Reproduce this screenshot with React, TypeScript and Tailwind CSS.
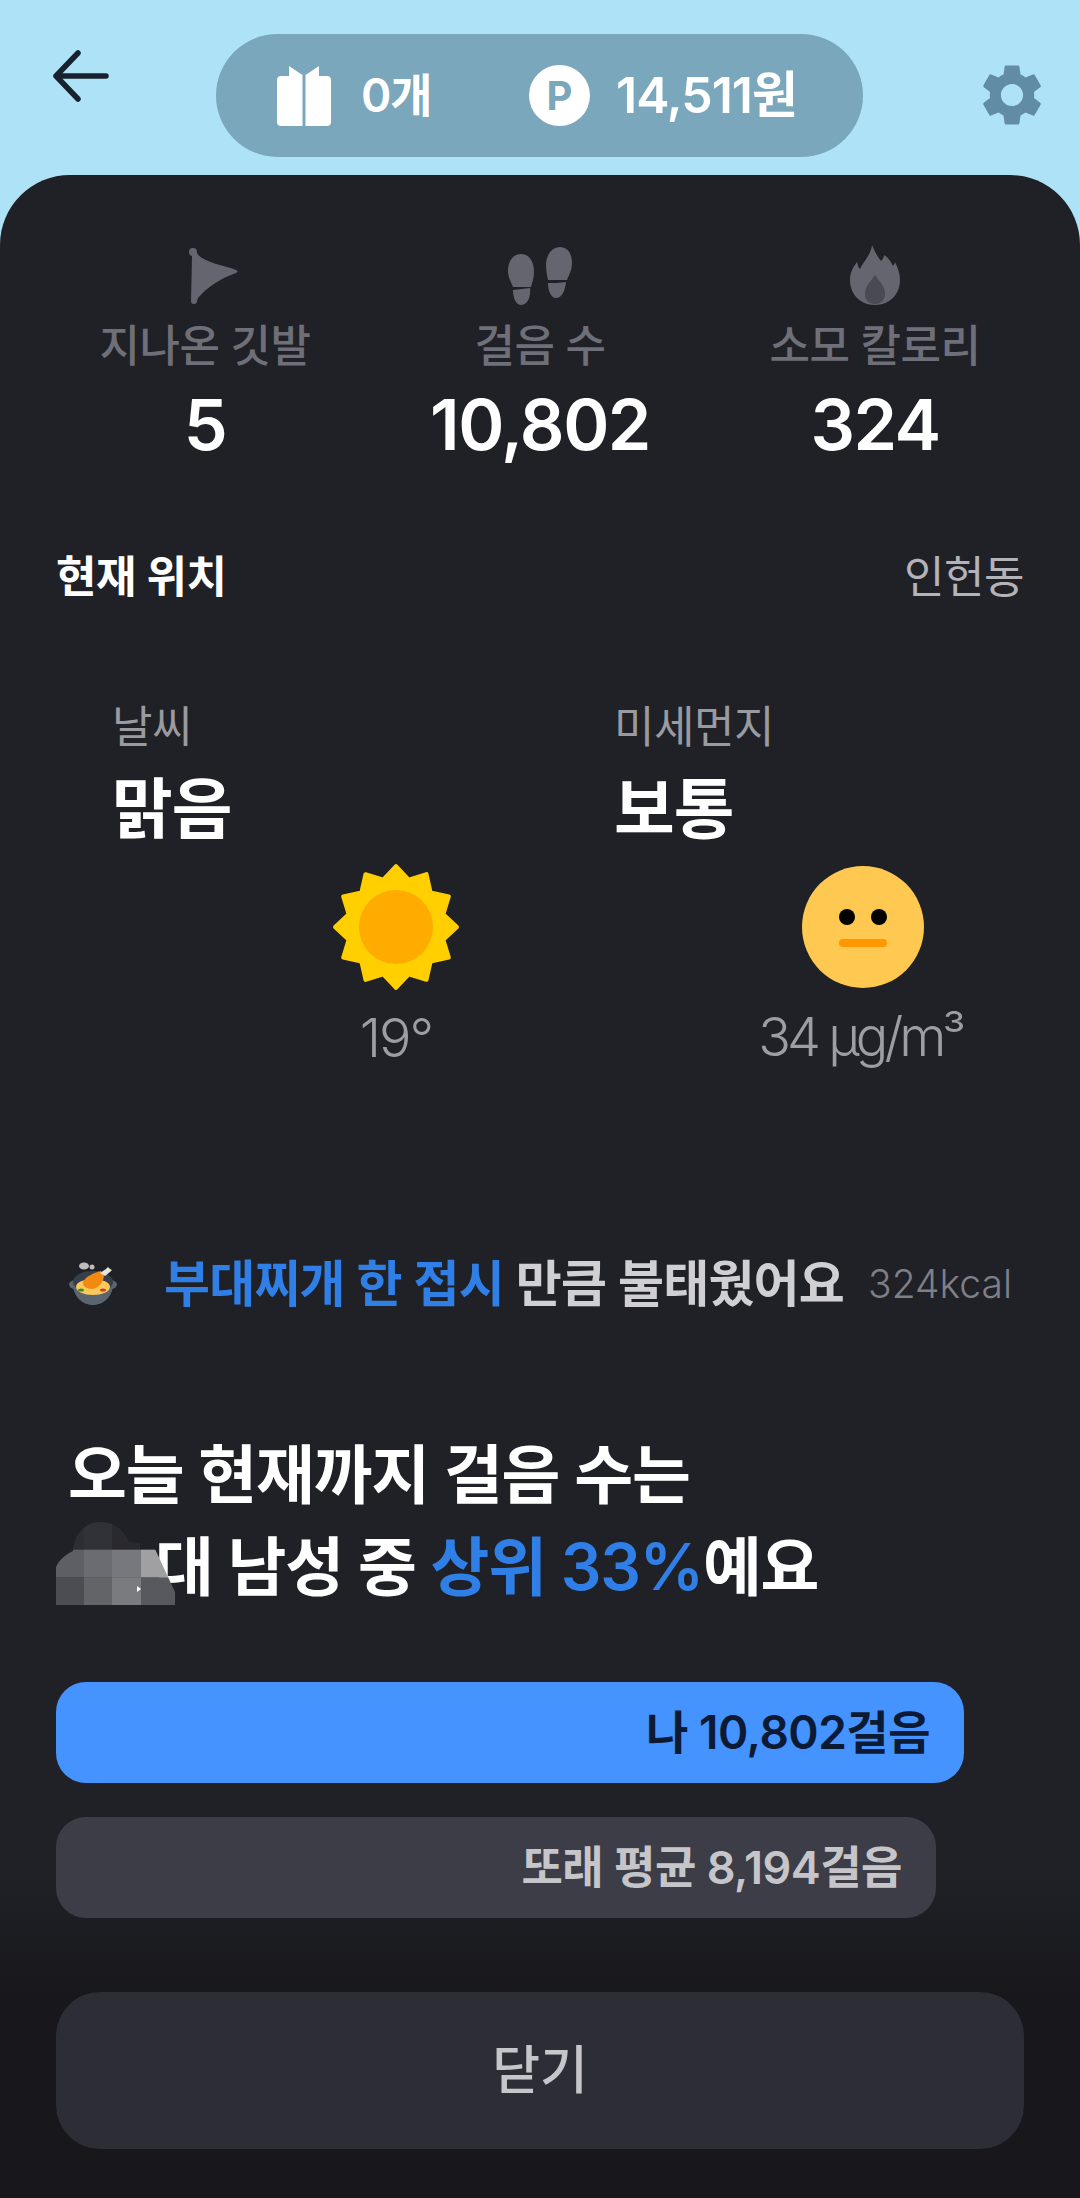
import { MdSettings } from 'react-icons/md';

const sunPoints = Array.from({ length: 24 }, (_, i) => {
  const r = i % 2 === 0 ? 61 : 49;
  const a = (i * Math.PI) / 12 - Math.PI / 2;
  return `${64 + r * Math.cos(a)},${64 + r * Math.sin(a)}`;
}).join(' ');

function BackArrow() {
  return (
    <svg width="56" height="52" viewBox="0 0 56 52" fill="none" stroke="#18222e" strokeWidth="5.5" strokeLinecap="round" strokeLinejoin="round">
      <path d="M53 26H3M25 3 3 26l22 23" />
    </svg>
  );
}

function Gift() {
  return (
    <svg width="54" height="60" viewBox="0 0 54 60" fill="#fff">
      <path d="M12 0 25.5 9v51H4a4 4 0 0 1-4-4V14a4 4 0 0 1 4-4h8V0Z" />
      <path d="M42 0 28.5 9v51H50a4 4 0 0 0 4-4V14a4 4 0 0 0-4-4h-8V0Z" />
    </svg>
  );
}

function FlagIcon() {
  return (
    <svg className="ml-[18px]" width="52" height="58" viewBox="0 0 52 58" fill="#64656f">
      <path d="M1 5a4 4 0 0 1 8 0c0 2 2 4 5 6 10 6 24 8 34 12 2 1 2 2 0 3-14 5-28 13-38 25l-1 3a3 3 0 0 1-6 0L4 9a4 4 0 0 1-3-4Z" />
    </svg>
  );
}

function StepsIcon() {
  return (
    <svg width="66" height="58" viewBox="0 0 66 58" fill="#64656f">
      <path d="M14 7c8 0 13 7 13 18 0 6-2 11-3 15H6C4 35 1 30 1 24 1 14 6 7 14 7Z" />
      <path d="M6 43c6-1 12-1 17-2 1 8-2 17-9 17-5 0-8-7-8-15Z" />
      <path d="M53 0c8 0 12 7 12 16 0 7-3 12-5 17H41c-1-5-2-10-2-15C39 8 45 0 53 0Z" />
      <path d="M41 36c6 0 12 0 18-1-1 9-4 16-10 16-5 0-8-7-8-15Z" />
    </svg>
  );
}

function FlameIcon() {
  return (
    <svg width="50" height="60" viewBox="0 0 50 60">
      <path fill="#64656f" d="M22 0c3 7 5 11 9 16 2-2 3-4 3-6 4 2 7 7 9 11 1-1 2-3 2-4 3 6 5 12 5 18 0 14-10 25-25 25S0 49 0 35c0-7 3-13 7-18 1 3 1 5 3 7C13 17 21 10 22 0Z" />
      <path fill="#494a54" d="M25 30c4 6 10 11 10 19 0 6-4 10-10 10s-10-4-10-10c0-8 6-13 10-19Z" />
    </svg>
  );
}

function PotEmoji() {
  return (
    <svg width="50" height="44" viewBox="0 0 50 44">
      <ellipse cx="16" cy="4" rx="5" ry="3.5" fill="#bdbdbd" />
      <circle cx="24" cy="5" r="2.5" fill="#bdbdbd" />
      <path d="M1 22c1-3 4-4 6-4v9c-3 0-6-2-6-5ZM49 22c-1-3-4-4-6-4v9c3 0 6-2 6-5Z" fill="#5a6570" />
      <ellipse cx="25" cy="20" rx="20" ry="11" fill="#37404a" />
      <path d="M5 22c0 12 9 21 20 21s20-9 20-21c-4 7-12 10-20 10S9 29 5 22Z" fill="#5a6570" />
      <ellipse cx="25" cy="25" rx="17" ry="8" fill="#fbc95a" />
      <path d="M15 20c2-5 10-9 18-11l3 5c-1 7-5 12-12 13-5 0-10-3-9-7Z" fill="#f28a11" />
      <path d="m32 11 6-4 2-2 2 2 2 1-2 2-5 4-5-3Z" fill="#e8e4de" />
      <ellipse cx="13" cy="28" rx="3" ry="1.6" fill="#3d8b37" />
      <ellipse cx="35" cy="28" rx="3" ry="1.6" fill="#d23a2f" />
    </svg>
  );
}

// mosaic patch that hides the age digit in the headline
function MosaicPatch() {
  const cols = [0, 28, 56, 85];
  const widths = [28, 28, 29, 34];
  const rows = [
    ['#2d2e33', '#313237', '#29292e', '#28282d'],
    ['#5e5f64', '#6b6c71', '#77787d', '#a0a0a3'],
    ['#4c4d52', '#636468', '#7a7b7f', '#58595e'],
  ];
  return (
    <svg className="absolute left-0 top-[1px]" width="119" height="83" viewBox="0 0 119 83">
      <defs>
        <clipPath id="mosaic">
          <path d="M0 83V45c3-7 9-12 17-16 1-17 12-29 27-29 15 0 25 9 29 20l11 1v6h15l20 43v13H0Z" />
        </clipPath>
      </defs>
      <g clipPath="url(#mosaic)">
        {rows.map((row, r) =>
          row.map((c, i) => <rect key={`${r}-${i}`} x={cols[i]} y={r * 27.7} width={widths[i]} height="28" fill={c} />),
        )}
      </g>
      <path d="m81 64 4 3-4 3Z" fill="#fff" />
    </svg>
  );
}

function Stat({ icon, label, value }: { icon: React.ReactNode; label: string; value: string }) {
  return (
    <div className="flex flex-col items-center">
      <div className="flex h-[60px] items-end">{icon}</div>
      <div className="mt-[13px] text-[44px] leading-[56px] font-medium tracking-[-0.5px] text-[#6e6f78]">{label}</div>
      <div className="mt-[11px] text-[70px] leading-[80px] font-semibold tracking-[-1.5px] text-white">{value}</div>
    </div>
  );
}

export default function App() {
  return (
    <div
      className="flex h-[2198px] w-full flex-col overflow-hidden bg-[#aee3f7]"
      style={{ fontFamily: 'Inter, "Noto Sans CJK KR", sans-serif' }}
    >
      {/* Top bar */}
      <header className="flex h-[175px] shrink-0 items-start pl-[53px] pr-[31px]">
        <div className="mt-[50px] w-[163px] shrink-0">
          <BackArrow />
        </div>
        <div className="mt-[34px] flex h-[123px] w-[647px] shrink-0 items-center rounded-[62px] bg-[#7aa7bc] pl-[61px] text-white">
          <Gift />
          <span className="ml-[30px] w-[112px] text-[46px] font-semibold tracking-[-1px]">0개</span>
          <span className="ml-[56px] flex h-[61px] w-[61px] items-center justify-center rounded-full bg-white text-[40px] font-bold text-[#7aa7bc]">
            P
          </span>
          <span className="ml-[26px] text-[50px] font-semibold tracking-[-1px]">14,511원</span>
        </div>
        <MdSettings className="mt-[58px] ml-auto text-[#628ba5]" size={74} />
      </header>

      {/* Sheet */}
      <main className="flex flex-1 flex-col rounded-t-[70px] bg-[linear-gradient(#202126_0,#202126_1700px,#17171c_1820px)] px-[56px]">
        <section className="mt-[70px] grid grid-cols-[298px_1fr_298px]">
          <Stat icon={<FlagIcon />} label="지나온 깃발" value="5" />
          <Stat icon={<StepsIcon />} label="걸음 수" value="10,802" />
          <Stat icon={<FlameIcon />} label="소모 칼로리" value="324" />
        </section>

        <section className="mt-[84px] flex items-center justify-between">
          <span className="text-[44px] leading-[56px] font-semibold tracking-[-0.5px] text-white">현재 위치</span>
          <span className="text-[44px] leading-[56px] tracking-[-0.5px] text-[#b3b3b9]">인헌동</span>
        </section>

        <section className="mt-[94px] grid grid-cols-[502px_1fr] pl-[56px]">
          <div>
            <div className="text-[44px] leading-[56px] tracking-[-0.5px] text-[#9a9aa1]">날씨</div>
            <div className="mt-[12px] text-[66px] leading-[84px] font-semibold tracking-[-1px] text-white">맑음</div>
            <div className="mt-[12px] ml-[156px] flex w-[256px] flex-col items-center whitespace-nowrap">
              <svg width="128" height="128" viewBox="0 0 128 128">
                <polygon points={sunPoints} fill="#ffcf00" stroke="#ffcf00" strokeWidth="4" strokeLinejoin="round" />
                <circle cx="64" cy="64" r="37" fill="#ffab00" />
              </svg>
              <div className="mt-[13px] text-[54px] leading-[68px] font-light tracking-[-2px] text-[#9d9da4]">19°</div>
            </div>
          </div>
          <div>
            <div className="text-[44px] leading-[56px] tracking-[-0.5px] text-[#9a9aa1]">미세먼지</div>
            <div className="mt-[12px] text-[66px] leading-[84px] font-semibold tracking-[-1px] text-white">보통</div>
            <div className="mt-[12px] ml-[119px] flex w-[260px] flex-col items-center whitespace-nowrap">
              <svg width="122" height="128" viewBox="0 0 122 128">
                <circle cx="61" cy="64" r="61" fill="#ffc850" />
                <circle cx="45" cy="54" r="8" fill="#000" />
                <circle cx="77" cy="54" r="8" fill="#000" />
                <rect x="37" y="76" width="48" height="8" rx="4" fill="#ff9800" />
              </svg>
              <div className="mt-[12px] pr-[6px] text-[54px] leading-[68px] font-light tracking-[-4px] text-[#9d9da4]">34 µg/m³</div>
            </div>
          </div>
        </section>

        <section className="mt-[182px] flex items-center pl-[12px]">
          <PotEmoji />
          <p className="ml-[46px] text-[50px] leading-[60px] font-semibold tracking-[-0.8px] text-[#d0d0d4]">
            <span className="text-[#2f7fe6]">부대찌개 한 접시</span> 만큼 불태웠어요
          </p>
          <span className="ml-auto pr-[12px] text-[39px] leading-[60px] font-light text-[#7f7f87]">324kcal</span>
        </section>

        <section className="mt-[115px] pl-[12px] text-[64px] leading-[92px] font-semibold tracking-[-1.2px] text-white">
          <div>오늘 현재까지 걸음 수는</div>
          <div className="relative -ml-[12px] pl-[99px]">
            대 남성 중 <span className="text-[#2f7fe6]">상위 33%</span>예요
            <MosaicPatch />
          </div>
        </section>

        <section className="mt-[69px] flex flex-col gap-[34px]">
          <div className="flex h-[101px] w-[908px] items-center justify-end rounded-[30px] bg-[#4493ff] pr-[34px] text-[46px] font-semibold tracking-[-0.5px] text-[#0d1a33]">
            나 10,802걸음
          </div>
          <div className="flex h-[101px] w-[880px] items-center justify-end rounded-[30px] bg-[#3c3d47] pr-[34px] text-[45px] font-semibold tracking-[-0.5px] text-[#c6c6ca]">
            또래 평균 8,194걸음
          </div>
        </section>

        <button className="mt-[74px] flex h-[157px] w-full items-center justify-center rounded-[44px] bg-[#2c2d35] text-[52px] font-medium text-[#c6c6ca]">
          닫기
        </button>
      </main>
    </div>
  );
}
